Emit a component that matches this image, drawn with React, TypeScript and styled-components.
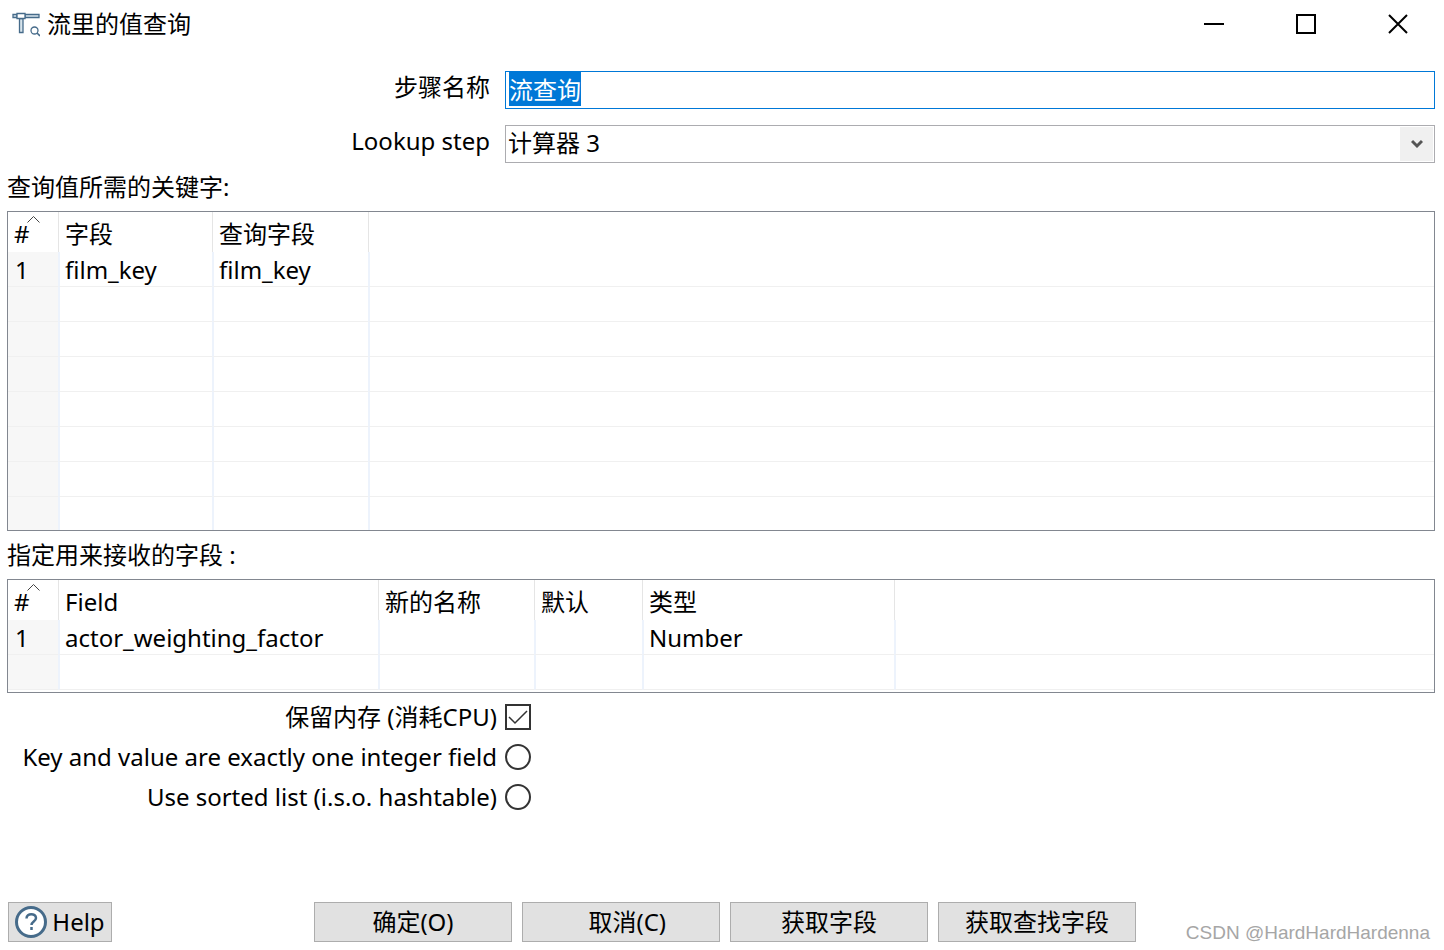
import React, { useEffect, useRef } from "react";
import styled, { createGlobalStyle } from "styled-components";

const GlobalStyle = createGlobalStyle`
  *, *::before, *::after { box-sizing: border-box; }
  body {
    margin: 0;
    background: #fff;
    color: #000;
    font-family: "Noto Sans", "Noto Sans CJK SC", sans-serif;
    font-size: 24px;
    line-height: 32px;
  }
  button, input, select { font: inherit; color: inherit; }
`;

const Dialog = styled.div`
  display: flex;
  flex-direction: column;
  min-height: 100vh;
`;

const TitleBar = styled.header`
  display: flex;
  align-items: center;
  height: 48px;
  padding-left: 12px;
`;

const Title = styled.h1`
  flex: 1;
  margin: 0 0 0 7px;
  font-size: 24px;
  font-weight: 400;
`;

const CaptionButton = styled.button`
  display: grid;
  place-items: center;
  width: 92px;
  height: 48px;
  padding: 0;
  border: 0;
  background: none;
`;

const Body = styled.main`
  display: flex;
  flex-direction: column;
  padding: 23px 9px 0 7px;
`;

const Form = styled.div`
  display: grid;
  grid-template-columns: 483px 1fr;
  gap: 16px 15px;
`;

const FieldLabel = styled.label`
  text-align: right;
`;

const TextInput = styled.input`
  width: 100%;
  height: 38px;
  padding: 0 3px 3px;
  border: 1px solid #0078d7;
  outline: 0;
  &::selection { background: #0078d7; color: #fff; }
`;

const Combo = styled.div`
  position: relative;
`;

const Select = styled.select`
  display: block;
  width: 100%;
  height: 38px;
  padding: 0 36px 2px 2px;
  border: 1px solid #acacb0;
  border-radius: 0;
  background: #fff;
  appearance: none;
`;

const ComboArrow = styled.span`
  position: absolute;
  top: 2px;
  right: 2px;
  bottom: 2px;
  display: grid;
  place-items: center;
  width: 33px;
  background: #f0f0f0;
  pointer-events: none;
`;

const SectionLabel = styled.h2`
  height: 48px;
  margin: 0;
  font-size: 24px;
  font-weight: 400;
  line-height: 48px;
`;

const GridBox = styled.div<{ $height: number }>`
  height: ${(p) => p.$height}px;
  overflow: hidden;
  border: 1px solid #828790;
`;

const DataTable = styled.table`
  width: 100%;
  border-spacing: 0;
  table-layout: fixed;
`;

const HeadCell = styled.th<{ $width?: number }>`
  position: relative;
  width: ${(p) => (p.$width ? `${p.$width}px` : "auto")};
  height: 40px;
  padding: 3px 0 0 6px;
  font-weight: 400;
  text-align: left;
  & + & { border-left: 1px solid #e5e5e5; }
`;

const SortMark = styled.svg`
  position: absolute;
  top: 4px;
  left: 19px;
`;

const Cell = styled.td`
  height: 35px;
  padding: 2px 0 0 5px;
  border-bottom: 1px solid #f0f0f0;
  & + & { border-left: 2px solid #edf3fc; }
  &:first-child { padding-left: 7px; background: #f7f7f7; }
`;

const Options = styled.div`
  display: flex;
  flex-direction: column;
  margin-top: 4px;
`;

const Option = styled.label`
  display: grid;
  grid-template-columns: 490px 26px;
  column-gap: 8px;
  align-items: center;
  height: 40px;
  text-align: right;
`;

const CheckBox = styled.input`
  width: 26px;
  height: 26px;
  margin: 0;
  border: 2px solid #333;
  appearance: none;
  &:checked {
    background: url("data:image/svg+xml,%3Csvg xmlns='http://www.w3.org/2000/svg' viewBox='0 0 22 22'%3E%3Cpath d='M2 11l6 6L20 5' fill='none' stroke='%23333' stroke-width='1.5'/%3E%3C/svg%3E") center / 22px 22px no-repeat;
  }
`;

const Radio = styled.input`
  width: 26px;
  height: 26px;
  margin: 0;
  border: 2px solid #333;
  border-radius: 50%;
  appearance: none;
`;

const Footer = styled.footer`
  display: grid;
  grid-template-columns: 1fr auto 1fr;
  margin-top: auto;
  padding: 0 2px 8px 8px;
`;

const ButtonGroup = styled.div`
  display: flex;
  gap: 10px;
`;

const Button = styled.button<{ $width: number }>`
  display: flex;
  align-items: center;
  justify-content: center;
  gap: 5px;
  width: ${(p) => p.$width}px;
  height: 40px;
  padding: 0;
  border: 1px solid #adadad;
  background: #e1e1e1;
  white-space: pre;
`;

const Watermark = styled.span`
  justify-self: end;
  align-self: end;
  padding-right: 12px;
  color: #a6a6a6;
  font-family: "Liberation Sans", sans-serif;
  font-size: 19px;
  line-height: 18px;
`;

type Column = { label: string; width?: number };

function FieldGrid(props: { columns: Column[]; rows: string[][]; height: number }) {
  return (
    <GridBox $height={props.height}>
      <DataTable>
        <thead>
          <tr>
            <HeadCell $width={50}>
              #
              <SortMark width="13" height="7" viewBox="0 0 13 7" fill="none" stroke="#444">
                <path d="M.5 6.5l6-6 6 6" />
              </SortMark>
            </HeadCell>
            {props.columns.map((c) => (
              <HeadCell key={c.label} $width={c.width}>{c.label}</HeadCell>
            ))}
            <HeadCell />
          </tr>
        </thead>
        <tbody>
          {props.rows.map((row, i) => (
            <tr key={i}>
              <Cell>{row.length ? i + 1 : ""}</Cell>
              {props.columns.map((c, j) => (
                <Cell key={c.label}>{row[j]}</Cell>
              ))}
              <Cell />
            </tr>
          ))}
        </tbody>
      </DataTable>
    </GridBox>
  );
}

const keyColumns: Column[] = [
  { label: "字段", width: 154 },
  { label: "查询字段", width: 156 },
];
const keyRows: string[][] = [["film_key", "film_key"], [], [], [], [], [], [], []];

const valueColumns: Column[] = [
  { label: "Field", width: 320 },
  { label: "新的名称", width: 156 },
  { label: "默认", width: 108 },
  { label: "类型", width: 252 },
];
const valueRows: string[][] = [["actor_weighting_factor", "", "", "Number"], []];

export default function App() {
  const nameRef = useRef<HTMLInputElement>(null);
  useEffect(() => {
    nameRef.current?.focus();
    nameRef.current?.select();
  }, []);

  return (
    <>
      <GlobalStyle />
      <Dialog>
        <TitleBar>
          <svg width="28" height="26" viewBox="0 0 28 26" fill="#d8e4ec" stroke="#466b8a" strokeWidth="1.3">
            <path d="M1 3.500h4v3h-4zM13 3.500h14v3h-14zM7.500 7.500h3.500v14h-3.500z" />
            <path d="M5 2.500h8v5h-8z" fill="#fff" />
            <circle cx="22.500" cy="19.500" r="3.500" fill="#fff" />
            <path d="M25 22l3 3" strokeWidth="1.600" />
          </svg>
          <Title>流里的值查询</Title>
          <CaptionButton aria-label="最小化">
            <svg width="20" height="20" stroke="#000" strokeWidth="2"><path d="M0 10h20" /></svg>
          </CaptionButton>
          <CaptionButton aria-label="最大化">
            <svg width="20" height="20" stroke="#000" strokeWidth="2" fill="none"><path d="M1 1h18v18H1z" /></svg>
          </CaptionButton>
          <CaptionButton aria-label="关闭">
            <svg width="20" height="20" stroke="#000" strokeWidth="2"><path d="M1 1l18 18M19 1L1 19" /></svg>
          </CaptionButton>
        </TitleBar>
        <Body>
          <Form>
            <FieldLabel htmlFor="step-name">步骤名称</FieldLabel>
            <TextInput id="step-name" ref={nameRef} defaultValue="流查询" />
            <FieldLabel htmlFor="lookup-step">Lookup step</FieldLabel>
            <Combo>
              <Select id="lookup-step" defaultValue="计算器 3">
                <option>计算器 3</option>
              </Select>
              <ComboArrow>
                <svg width="12" height="10" viewBox="0 0 12 10" fill="none" stroke="#555" strokeWidth="3">
                  <path d="M1 2l5 5 5-5" />
                </svg>
              </ComboArrow>
            </Combo>
          </Form>
          <SectionLabel>查询值所需的关键字:</SectionLabel>
          <FieldGrid columns={keyColumns} rows={keyRows} height={320} />
          <SectionLabel>指定用来接收的字段 :</SectionLabel>
          <FieldGrid columns={valueColumns} rows={valueRows} height={114} />
          <Options>
            <Option>保留内存 (消耗CPU)<CheckBox type="checkbox" defaultChecked /></Option>
            <Option>Key and value are exactly one integer field<Radio type="radio" name="storage" /></Option>
            <Option>Use sorted list (i.s.o. hashtable)<Radio type="radio" name="storage" /></Option>
          </Options>
        </Body>
        <Footer>
          <Button $width={104}>
            <svg width="32" height="32" viewBox="0 0 32 32" fill="none" stroke="#466b8a">
              <circle cx="16" cy="16" r="14.500" fill="#fff" strokeWidth="3" />
              <path d="M11.500 12.500c0-6 9.500-5.500 9.500-.5 0 3.500-4.500 3.500-4.500 7M16.500 21v3" strokeWidth="2.500" />
            </svg>
            Help
          </Button>
          <ButtonGroup>
            <Button $width={198}>确定(O)</Button>
            <Button $width={198}>{"  取消(C)"}</Button>
            <Button $width={198}>获取字段</Button>
            <Button $width={198}>获取查找字段</Button>
          </ButtonGroup>
          <Watermark>CSDN @HardHardHardenna</Watermark>
        </Footer>
      </Dialog>
    </>
  );
}
